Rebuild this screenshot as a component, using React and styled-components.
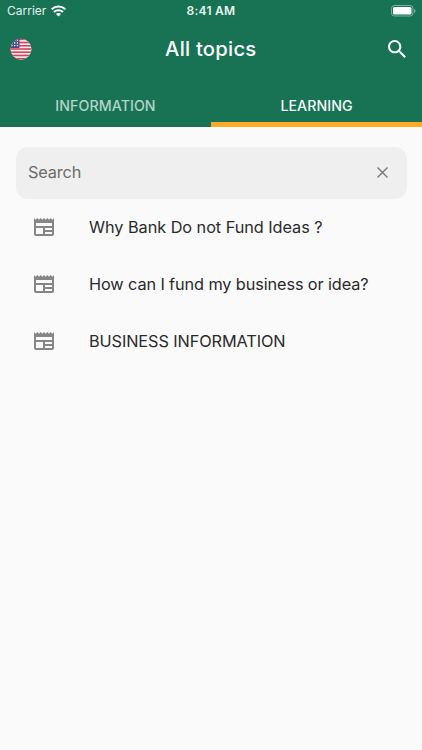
import React from 'react';
import styled, { createGlobalStyle } from 'styled-components';

const Global = createGlobalStyle`
  * { box-sizing: border-box; }
  body { margin: 0; background: #fafafa; font-family: Inter, "Liberation Sans", sans-serif; }
`;

const Screen = styled.div`
  width: 422px;
  height: 750px;
  overflow: hidden;
  background: #fafafa;
`;

const Header = styled.header`
  height: 126.5px;
  background: #177353;
  color: #fff;
`;

const StatusBar = styled.div`
  height: 21px;
  display: grid;
  grid-template-columns: 1fr auto 1fr;
  align-items: center;
  padding: 1px 6px 0 7px;
  line-height: 20px;
`;

const Carrier = styled.div`
  display: flex;
  align-items: center;
  gap: 4.5px;
  font-size: 12px;
  letter-spacing: 0;
  color: #e6f2ec;
`;

const Clock = styled.div`
  margin-right: 1px;
  font-size: 12px;
  font-weight: 600;
  letter-spacing: 0.25px;
  color: #e9f4ef;
`;

const BatteryIcon = styled.svg`
  justify-self: end;
  display: block;
  margin-top: -1px;
`;

const AppBar = styled.div`
  height: 56px;
  display: grid;
  grid-template-columns: 1fr auto 1fr;
  align-items: center;
  padding: 0 13px 0 9.5px;
`;

const Title = styled.h1`
  margin: 0 0 0 3px;
  font-size: 20.2px;
  font-weight: 500;
  letter-spacing: 0.25px;
  line-height: 26px;
`;

const SearchIcon = styled.svg`
  display: block;
  justify-self: end;
`;

const Tabs = styled.nav`
  display: flex;
  height: 49.5px;
`;

const Tab = styled.div`
  flex: 1;
  display: flex;
  align-items: center;
  justify-content: center;
  padding-top: 12.5px;
  border-bottom: 5.5px solid ${(p) => (p.$active ? '#fbaa2c' : 'transparent')};
  color: ${(p) => (p.$active ? '#f5faf8' : '#b5d3c8')};
  font-size: 14.2px;
  font-weight: 500;
  letter-spacing: ${(p) => p.$spacing};
`;

const SearchField = styled.div`
  margin: 20.5px 15.5px 0;
  height: 51.5px;
  border-radius: 12px;
  background: #efefef;
  display: flex;
  align-items: center;
  justify-content: space-between;
  padding: 0 19px 0 12.5px;
  color: #6b6b6b;
  font-size: 16.3px;
  letter-spacing: -0.15px;
`;

const Placeholder = styled.span`
  margin-top: -2px;
`;

const List = styled.ul`
  margin: 0;
  padding: 0;
  list-style: none;
`;

const Row = styled.li`
  height: 57px;
  display: flex;
  align-items: center;
  padding-left: 32px;
  color: #2a2a2a;
  font-size: 16.3px;
  letter-spacing: ${(p) => p.$spacing};
  white-space: nowrap;
`;

const RowIcon = styled.svg`
  flex: none;
  margin-right: 33px;
  fill: #868686;
`;

const Flag = () => (
  <svg width="22" height="22" viewBox="0 0 22 22">
    <defs>
      <clipPath id="flag-circle"><circle cx="11" cy="11.2" r="10.5" /></clipPath>
    </defs>
    <g clipPath="url(#flag-circle)">
      <rect width="22" height="22" fill="#f6eef1" />
      {[0, 1, 2, 3, 4, 5, 6].map((i) => (
        <rect key={i} y={0.5 + i * 3.23} width="22" height="1.62" fill="#d3455b" />
      ))}
      <rect width="9.5" height="10" fill="#484b83" />
      {[2.2, 4.9, 7.6].map((y) =>
        [2, 4.7, 7.4].map((x) => <circle key={`${x}-${y}`} cx={x} cy={y} r="0.8" fill="#e4e4f0" />)
      )}
    </g>
  </svg>
);

const Wifi = () => (
  <svg width="15" height="12" viewBox="0 0 15 12" fill="none" stroke="#fff" strokeWidth="2.1">
    <path d="M0.7 4.2C4.6 0.5 10.4 0.5 14.3 4.2" />
    <path d="M3 6.9C5.5 4.6 9.5 4.6 12 6.9" />
    <path d="M7.5 11.4L5 8.9C6.3 7.7 8.7 7.7 10 8.9Z" fill="#fff" stroke="none" />
  </svg>
);

const Battery = () => (
  <BatteryIcon width="25" height="12" viewBox="0 0 25 12">
    <rect x="0.5" y="0.5" width="21.5" height="10.5" rx="3" fill="none" stroke="#7db09e" />
    <rect x="2" y="2" width="18.5" height="7.5" rx="1.6" fill="#fff" />
    <path d="M23.2 4v4q1.3-.6 1.3-2t-1.3-2" fill="#8bb9a9" />
  </BatteryIcon>
);

const NewsIcon = () => (
  <RowIcon width="24" height="24" viewBox="0 0 24 24">
    <path d="M22 3l-1.67 1.67L18.67 3 17 4.67 15.33 3l-1.66 1.67L12 3l-1.67 1.67L8.67 3 7 4.67 5.33 3 3.67 4.67 2 3v16c0 1.1.9 2 2 2h16c1.1 0 2-.9 2-2V3zM11 19H4v-6h7v6zm9 0h-7v-2h7v2zm0-4h-7v-2h7v2zm0-4H4V8h16v3z" />
  </RowIcon>
);

const topics = [
  { text: 'Why Bank Do not Fund Ideas ?', spacing: '-0.05px' },
  { text: 'How can I fund my business or idea?', spacing: '-0.11px' },
  { text: 'BUSINESS INFORMATION', spacing: '-0.1px' },
];

export default function App() {
  return (
    <Screen>
      <Global />
      <Header>
        <StatusBar>
          <Carrier>Carrier <Wifi /></Carrier>
          <Clock>8:41 AM</Clock>
          <Battery />
        </StatusBar>
        <AppBar>
          <Flag />
          <Title>All topics</Title>
          <SearchIcon width="24.5" height="24.5" viewBox="0 0 24 24" fill="#fff">
            <path d="M15.5 14h-.79l-.28-.27C15.41 12.59 16 11.11 16 9.5 16 5.91 13.09 3 9.5 3S3 5.91 3 9.5 5.91 16 9.5 16c1.61 0 3.09-.59 4.23-1.57l.27.28v.79l5 4.99L20.49 19l-4.99-5zm-6 0C7.01 14 5 11.99 5 9.5S7.01 5 9.5 5 14 7.01 14 9.5 11.99 14 9.5 14z" />
          </SearchIcon>
        </AppBar>
        <Tabs>
          <Tab $spacing="0.07px">INFORMATION</Tab>
          <Tab $active $spacing="0.05px">LEARNING</Tab>
        </Tabs>
      </Header>
      <SearchField>
        <Placeholder>Search</Placeholder>
        <svg width="11" height="11" viewBox="0 0 11 11" stroke="#777" strokeWidth="1.4">
          <path d="M.5.5l10 10M10.5.5l-10 10" />
        </svg>
      </SearchField>
      <List>
        {topics.map((t) => (
          <Row key={t.text} $spacing={t.spacing}>
            <NewsIcon />
            {t.text}
          </Row>
        ))}
      </List>
    </Screen>
  );
}
